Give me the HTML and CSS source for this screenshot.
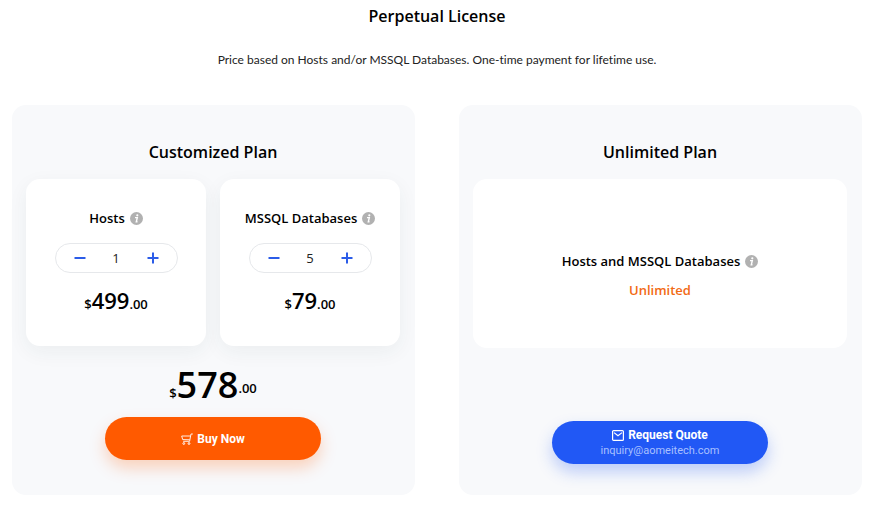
FILE: index.html
```html
<!DOCTYPE html>
<html lang="en">
<head>
<meta charset="utf-8">
<meta name="viewport" content="width=device-width, initial-scale=1">
<title>Perpetual License</title>
<link rel="stylesheet" href="styles.css">
</head>
<body>
<svg class="symbols" aria-hidden="true">
  <symbol id="info" viewBox="0 0 13 13">
    <circle cx="6.5" cy="6.5" r="6.5" fill="#b1b1b1"/>
    <circle cx="7.3" cy="3.3" r="1.1" fill="#fff"/>
    <path d="M5 5.6h2.3L6.3 9.8h1.2" fill="none" stroke="#fff" stroke-width="1.4"/>
  </symbol>
  <symbol id="minus" viewBox="0 0 12 12"><path d="M0.5 6h11" stroke="#2b5ce8" stroke-width="2"/></symbol>
  <symbol id="plus" viewBox="0 0 12 12"><path d="M0.5 6h11M6 0.5v11" stroke="#2b5ce8" stroke-width="2"/></symbol>
</svg>
<main class="pricing">
  <h1 class="title">Perpetual License</h1>
  <p class="intro">Price based on Hosts and/or MSSQL Databases. One-time payment for lifetime use.</p>
  <div class="plans">
    <section class="plan">
      <h2 class="title">Customized Plan</h2>
      <div class="options">
        <div class="option">
          <label class="name" for="hosts">Hosts <svg class="info"><use href="#info"/></svg></label>
          <div class="stepper">
            <button type="button" aria-label="Fewer hosts"><svg><use href="#minus"/></svg></button>
            <input id="hosts" type="text" inputmode="numeric" value="1">
            <button type="button" aria-label="More hosts"><svg><use href="#plus"/></svg></button>
          </div>
          <p class="price"><span>$</span><strong>499</strong><span>.00</span></p>
        </div>
        <div class="option">
          <label class="name" for="databases">MSSQL Databases <svg class="info"><use href="#info"/></svg></label>
          <div class="stepper">
            <button type="button" aria-label="Fewer databases"><svg><use href="#minus"/></svg></button>
            <input id="databases" type="text" inputmode="numeric" value="5">
            <button type="button" aria-label="More databases"><svg><use href="#plus"/></svg></button>
          </div>
          <p class="price"><span>$</span><strong>79</strong><span>.00</span></p>
        </div>
      </div>
      <p class="total"><span>$</span><strong>578</strong><span class="cents">.00</span></p>
      <button type="button" class="action buy">
        <span class="caption"><svg class="cart" viewBox="0 0 12 12" fill="none" stroke="#fff"><path d="M11.8 1H10L8.6 8.3H2.2M9.5 3H.7l1 3.6 7 .2" stroke-width=".9"/><circle cx="2.8" cy="10.5" r=".9"/><circle cx="8" cy="10.5" r=".9"/></svg>Buy Now</span>
      </button>
    </section>
    <section class="plan">
      <h2 class="title">Unlimited Plan</h2>
      <div class="panel">
        <p class="name">Hosts and MSSQL Databases <svg class="info"><use href="#info"/></svg></p>
        <p class="unlimited">Unlimited</p>
      </div>
      <a class="action quote" href="mailto:inquiry@aomeitech.com">
        <span class="caption"><svg class="mail" viewBox="0 0 12 11" fill="none" stroke="#fff" stroke-width="1.2"><rect x=".6" y=".6" width="10.8" height="9.8" rx="1"/><path d="M2 2.6l4 3.2 4-3.2"/></svg>Request Quote</span>
        <span class="email">inquiry@aomeitech.com</span>
      </a>
    </section>
  </div>
</main>
</body>
</html>
```
FILE: styles.css
```css
* { box-sizing: border-box; }
body {
  margin: 0;
  background: #fff;
  color: #000;
  font-family: "Open Sans", "Noto Sans", sans-serif;
}
h1, h2, p { margin: 0; }
.symbols { display: none; }
.pricing { padding: 4px 9px 14px 12px; text-align: center; }
.title { font-size: 16px; font-weight: 600; line-height: 24px; }
.intro {
  margin-top: 20px;
  font-family: Lato, sans-serif;
  font-size: 12px;
  font-variant-ligatures: none;
  line-height: 24px;
  color: #222;
}
.plans {
  display: grid;
  grid-template-columns: 1fr 1fr;
  gap: 44px;
  margin-top: 33px;
}
.plan {
  display: flex;
  flex-direction: column;
  align-items: center;
  padding: 35px 15px 31px 14px;
  border-radius: 14px;
  background: #f8f9fb;
}
.options {
  display: grid;
  grid-template-columns: 1fr 1fr;
  gap: 14px;
  align-self: stretch;
  margin-top: 15px;
}
.option {
  display: flex;
  flex-direction: column;
  align-items: center;
  padding: 29px 14px 28px;
  border-radius: 14px;
  background: #fff;
  box-shadow: 0 6px 20px rgba(40, 60, 70, 0.06);
}
.name {
  display: flex;
  align-items: center;
  gap: 5px;
  font-size: 13px;
  font-weight: 600;
  line-height: 20px;
  white-space: nowrap;
}
.info { width: 13px; height: 13px; }
.stepper {
  display: flex;
  align-items: center;
  width: 123px;
  max-width: 100%;
  height: 30px;
  margin-top: 15px;
  border: 1px solid #e6e8eb;
  border-radius: 15px;
}
.stepper button {
  display: flex;
  flex: none;
  justify-content: center;
  width: 48px;
  padding: 0;
  border: 0;
  background: none;
}
.stepper svg { width: 12px; height: 12px; }
.stepper input {
  flex: 1;
  min-width: 0;
  padding: 0;
  border: 0;
  background: none;
  color: #222;
  font: 13px "Open Sans", sans-serif;
  text-align: center;
}
.price {
  display: flex;
  align-items: baseline;
  margin-top: 13px;
  font-size: 13px;
  font-weight: 600;
  line-height: 28px;
}
.price strong { font-size: 22px; font-weight: 600; }
.total {
  display: flex;
  align-items: baseline;
  margin-top: 19px;
  font-size: 13px;
  font-weight: 600;
  line-height: 40px;
}
.total strong { font-size: 36px; font-weight: 600; }
.total .cents { padding-bottom: 2px; align-self: center; }
.action {
  display: flex;
  flex-direction: column;
  align-items: center;
  justify-content: center;
  width: 216px;
  height: 43px;
  padding: 0;
  border: 0;
  border-radius: 22px;
  color: #fff;
  font-family: Roboto, sans-serif;
  text-decoration: none;
}
.buy {
  margin-top: 4px;
  background: #ff5a00;
  box-shadow: 0 8px 16px rgba(255, 90, 0, 0.25);
}
.quote {
  margin-top: 73px;
  background: #2158f5;
  box-shadow: 0 8px 16px rgba(33, 88, 245, 0.28);
}
.caption {
  display: flex;
  align-items: center;
  gap: 4px;
  font-size: 12px;
  font-weight: 700;
  line-height: 16px;
}
.cart { width: 12px; height: 12px; }
.mail { width: 12px; height: 11px; }
.email { font-size: 11px; line-height: 15px; color: #a9c0ff; }
.panel {
  display: flex;
  flex-direction: column;
  align-items: center;
  justify-content: center;
  gap: 9px;
  align-self: stretch;
  min-height: 169px;
  margin-top: 15px;
  padding: 48px 14px 24px;
  border-radius: 14px;
  background: #fff;
}
.unlimited { font-size: 13px; font-weight: 600; line-height: 20px; color: #f26a14; }
```
